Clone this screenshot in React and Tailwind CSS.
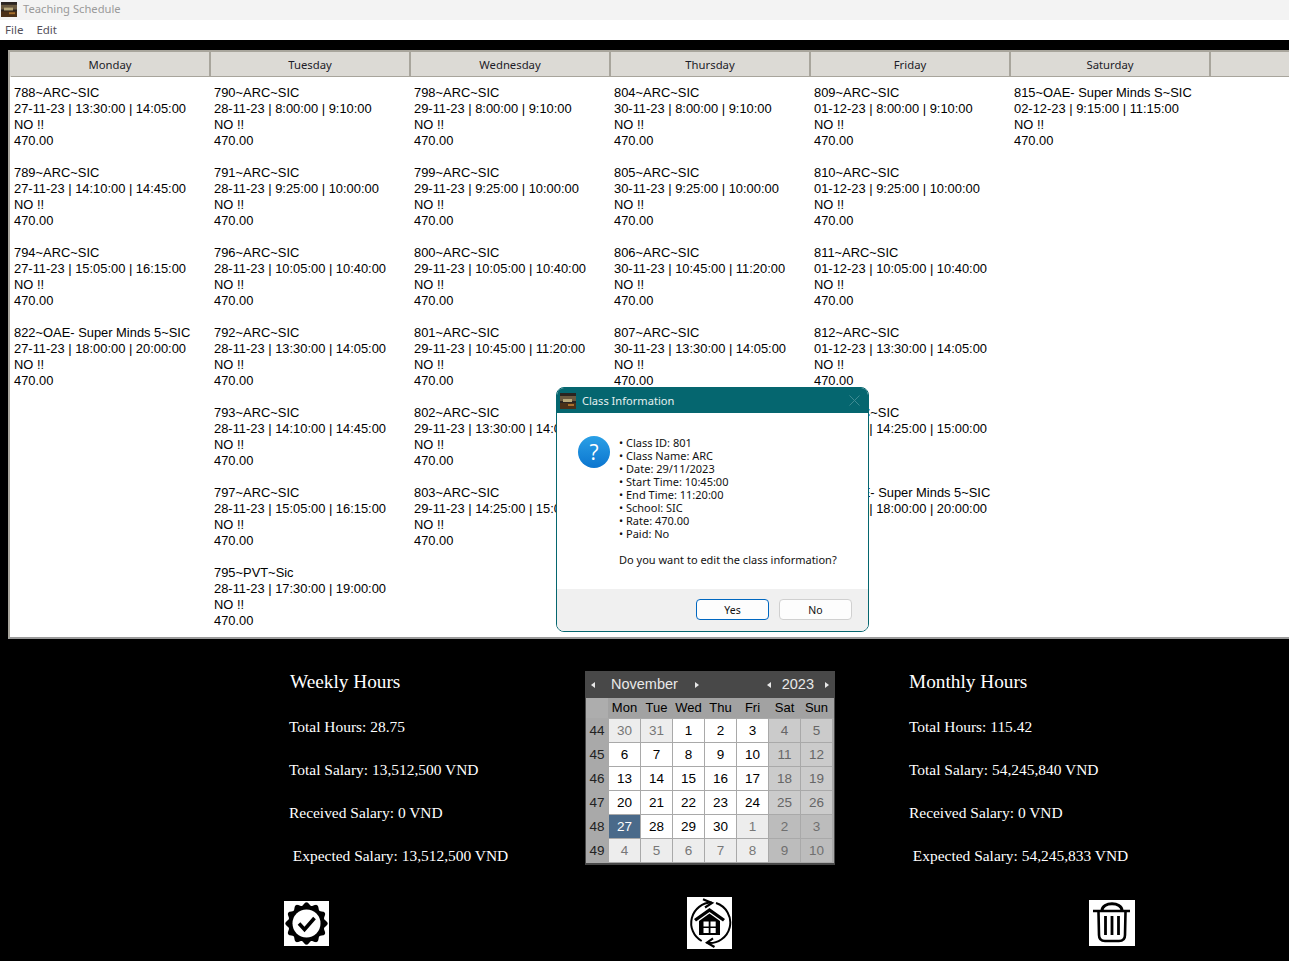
const columns = [
  { day: "Monday", date: "27-11-23", items: [
    ["788~ARC~SIC", "13:30:00 | 14:05:00"], ["789~ARC~SIC", "14:10:00 | 14:45:00"], ["794~ARC~SIC", "15:05:00 | 16:15:00"], ["822~OAE- Super Minds 5~SIC", "18:00:00 | 20:00:00"],
  ]},
  { day: "Tuesday", date: "28-11-23", items: [
    ["790~ARC~SIC", "8:00:00 | 9:10:00"], ["791~ARC~SIC", "9:25:00 | 10:00:00"], ["796~ARC~SIC", "10:05:00 | 10:40:00"], ["792~ARC~SIC", "13:30:00 | 14:05:00"], ["793~ARC~SIC", "14:10:00 | 14:45:00"], ["797~ARC~SIC", "15:05:00 | 16:15:00"], ["795~PVT~Sic", "17:30:00 | 19:00:00"],
  ]},
  { day: "Wednesday", date: "29-11-23", items: [
    ["798~ARC~SIC", "8:00:00 | 9:10:00"], ["799~ARC~SIC", "9:25:00 | 10:00:00"], ["800~ARC~SIC", "10:05:00 | 10:40:00"], ["801~ARC~SIC", "10:45:00 | 11:20:00"], ["802~ARC~SIC", "13:30:00 | 14:05:00"], ["803~ARC~SIC", "14:25:00 | 15:00:00"],
  ]},
  { day: "Thursday", date: "30-11-23", items: [
    ["804~ARC~SIC", "8:00:00 | 9:10:00"], ["805~ARC~SIC", "9:25:00 | 10:00:00"], ["806~ARC~SIC", "10:45:00 | 11:20:00"], ["807~ARC~SIC", "13:30:00 | 14:05:00"],
  ]},
  { day: "Friday", date: "01-12-23", items: [
    ["809~ARC~SIC", "8:00:00 | 9:10:00"], ["810~ARC~SIC", "9:25:00 | 10:00:00"], ["811~ARC~SIC", "10:05:00 | 10:40:00"], ["812~ARC~SIC", "13:30:00 | 14:05:00"], ["813~ARC~SIC", "14:25:00 | 15:00:00"], ["823~OAE- Super Minds 5~SIC", "18:00:00 | 20:00:00"],
  ]},
  { day: "Saturday", date: "02-12-23", items: [["815~OAE- Super Minds S~SIC", "9:15:00 | 11:15:00"]] },
];

const weeks = [
  [44, [[30, 1], [31, 1], [1, 0], [2, 0], [3, 0], [4, 0], [5, 0]]],
  [45, [[6, 0], [7, 0], [8, 0], [9, 0], [10, 0], [11, 0], [12, 0]]],
  [46, [[13, 0], [14, 0], [15, 0], [16, 0], [17, 0], [18, 0], [19, 0]]],
  [47, [[20, 0], [21, 0], [22, 0], [23, 0], [24, 0], [25, 0], [26, 0]]],
  [48, [[27, 0], [28, 0], [29, 0], [30, 0], [1, 1], [2, 1], [3, 1]]],
  [49, [[4, 1], [5, 1], [6, 1], [7, 1], [8, 1], [9, 1], [10, 1]]],
];

function cellClass(di, other, selected) {
  if (selected) return "bg-[#4a6a8a] text-white";
  if (di >= 5) return other ? "bg-[#bcbcbc] text-[#6f6f6f]" : "bg-[#cbcbcb] text-[#666666]";
  return other ? "bg-[#ededed] text-[#777777]" : "bg-white text-black";
}

function Thumb({ className }) {
  return (
    <svg className={className} viewBox="0 0 16 16" preserveAspectRatio="none">
      <rect width="16" height="16" fill="#2b2420" />
      <rect y="3" width="16" height="5" fill="#6b5a40" />
      <rect x="3" y="6" width="9" height="3" fill="#b9a97a" />
      <rect y="10" width="16" height="6" fill="#4a3018" />
      <rect x="8" y="11" width="6" height="2" fill="#a8702c" />
    </svg>
  );
}

function Arrow({ left }) {
  return (
    <svg width="4" height="6" viewBox="0 0 4 6" className="shrink-0">
      <path d={left ? "M4 0 L0 3 L4 6 Z" : "M0 0 L4 3 L0 6 Z"} fill="#e8e8e8" />
    </svg>
  );
}

function Stats({ title, rows, className, headingClass }) {
  return (
    <div className={"flex flex-col shrink-0 text-white [font-family:'Liberation_Serif',serif] " + className}>
      <div className={"text-[19.3px] leading-[22px] h-[46px] shrink-0 " + headingClass}>{title}</div>
      {rows.map((r, i) => (
        <div key={i} className="text-[15.45px] leading-[20px] h-[43px] shrink-0 whitespace-pre pl-px">{r}</div>
      ))}
    </div>
  );
}

function scallop() {
  const n = 12, pts = [];
  for (let i = 0; i <= 240; i++) {
    const a = (i / 240) * Math.PI * 2;
    const r = 19.7 + 1.5 * Math.cos(n * a);
    pts.push((22.5 + r * Math.sin(a)).toFixed(2) + "," + (22.5 - r * Math.cos(a)).toFixed(2));
  }
  return pts.join(" ");
}

function BadgeIcon() {
  return (
    <svg width="45" height="45" viewBox="0 0 45 45" className="bg-white">
      <polygon points={scallop()} fill="#000" />
      <circle cx="22.5" cy="22.5" r="14" fill="#fff" />
      <path d="M15 22.5 L20.5 28.5 L30.5 17" fill="none" stroke="#000" strokeWidth="3.6" />
    </svg>
  );
}

function HomeIcon() {
  return (
    <svg width="45" height="52" viewBox="0 0 45 52" className="bg-white">
      <path d="M14.7 44 A20.5 20.5 0 0 1 24.7 5.6" fill="none" stroke="#000" strokeWidth="2" />
      <path d="M29 6 A20.5 20.5 0 0 1 19.7 45.8" fill="none" stroke="#000" strokeWidth="2" />
      <path d="M16 2.2 L25 6 L18 10.5" fill="none" stroke="#000" strokeWidth="2.2" />
      <path d="M26 41.4 L20 45.6 L27.5 50" fill="none" stroke="#000" strokeWidth="2.2" />
      <path d="M22.5 11 L7 22 L9 24.5 L22.5 15 L36 24.5 L38 22 Z" fill="#000" />
      <path d="M12 24 L22.5 16.5 L33 24 V38 H12 Z" fill="#000" />
      <g fill="#fff">
        <rect x="16.5" y="24.5" width="5.2" height="5" />
        <rect x="23.5" y="24.5" width="5.2" height="5" />
        <rect x="16.5" y="31" width="5.2" height="5" />
        <rect x="23.5" y="31" width="5.2" height="5" />
      </g>
    </svg>
  );
}

function TrashIcon() {
  return (
    <svg width="46" height="46" viewBox="0 0 46 46" className="bg-white">
      <path d="M13 10.5 C13 1.5 33 1.5 33 10.5" fill="none" stroke="#000" strokeWidth="3" />
      <path d="M4 11 H41" stroke="#000" strokeWidth="2.5" />
      <path d="M9.5 12 L10 35 C10 39.5 12 41 16 41 H30 C34 41 36 39.5 36 35 L36.5 12" fill="none" stroke="#000" strokeWidth="2.6" />
      <path d="M16.5 16 V35 M23 16 V35 M29.5 16 V35" stroke="#000" strokeWidth="2.8" />
    </svg>
  );
}

export default function App() {
  return (
    <div className="relative w-[1289px] h-[961px] overflow-hidden bg-black flex flex-col">
      {/* title bar */}
      <div className="h-[20px] shrink-0 bg-[#f3f3f3] flex items-center pl-px pb-[2px]">
        <Thumb className="w-[16px] h-[15px]" />
        <span className="ml-[6px] text-[11.2px] leading-[14px] pb-[1px] text-[#9a9a9a] [font-family:'Noto_Sans',sans-serif]">Teaching Schedule</span>
      </div>
      {/* menu */}
      <div className="h-[20px] shrink-0 bg-white flex items-center pl-[5px] gap-[13px] text-[11.5px] text-[#55505a] [font-family:'Noto_Sans',sans-serif]">
        <span>File</span>
        <span>Edit</span>
      </div>
      {/* table */}
      <div className="mt-[10px] ml-[8px] h-[589px] shrink-0 bg-white border-l-2 border-t-2 border-b-2 border-[#a8a59c] border-b-[#9a9a9a] flex flex-col overflow-hidden">
        <div className="flex h-[25px] shrink-0 pl-px bg-[#dcdad5] text-[11.3px] text-[#1c1c28] [font-family:'Noto_Sans',sans-serif]">
          {columns.map((c) => (
            <div key={c.day} className="w-[200px] shrink-0 flex items-center justify-center pt-[2px] bg-[#dcdad5] border-r-2 border-b border-[#a8a59c]">{c.day}</div>
          ))}
          <div className="flex-1 bg-[#dcdad5] border-b border-[#a8a59c]" />
        </div>
        <div className="flex pt-[8px] text-[12.9px] leading-[16px] text-black [font-family:'Liberation_Sans',sans-serif]">
          {columns.map((c) => (
            <div key={c.day} className="w-[200px] shrink-0 pl-[4px] flex flex-col gap-[16px]">
              {c.items.map(([name, time]) => (
                <div key={name} className="whitespace-nowrap">
                  <div>{name}</div>
                  <div>{c.date} | {time}</div>
                  <div>NO !!</div>
                  <div>470.00</div>
                </div>
              ))}
            </div>
          ))}
        </div>
      </div>
      {/* bottom */}
      <div className="flex pl-[288px] pt-[32px] h-[258px] shrink-0">
        <Stats
          className="w-[297px]"
          headingClass="pl-[2px]"
          title="Weekly Hours"
          rows={["Total Hours: 28.75", "Total Salary: 13,512,500 VND", "Received Salary: 0 VND", " Expected Salary: 13,512,500 VND"]}
        />
        <div className="w-[250px] h-[194px] shrink-0 bg-[#a9a9a9] border-b-2 border-x border-[#484848] flex flex-col [font-family:'Liberation_Sans',sans-serif] text-[13.5px]">
          <div className="h-[27px] shrink-0 bg-[#484848] text-[#e8e8e8] text-[14.5px] flex items-center pl-[5px] pr-[5px]">
            <Arrow left />
            <span className="ml-[16px] w-[70px]">November</span>
            <span className="ml-[14px]"><Arrow /></span>
            <span className="flex-1" />
            <Arrow left />
            <span className="mx-[11px]">2023</span>
            <Arrow />
          </div>
          <div className="grid grid-cols-[22px_repeat(7,31px)] gap-x-px h-[20px] shrink-0 items-center text-center text-[13px] text-black bg-[#a2a2a2]">
            <span className="bg-[#adadad] h-full" />
            {["Mon", "Tue", "Wed", "Thu", "Fri", "Sat", "Sun"].map((d) => (
              <span key={d} className="h-full leading-[20px] whitespace-nowrap">{d}</span>
            ))}
          </div>
          <div className="flex flex-col gap-px pt-px">
            {weeks.map(([w, days]) => (
              <div key={w} className="grid grid-cols-[22px_repeat(7,31px)] gap-x-px h-[23px] items-center text-center">
                <span className="text-[#222222] pt-[2px]">{w}</span>
                {days.map(([d, other], di) => (
                  <span key={di} className={"h-full leading-[23px] " + cellClass(di, other === 1, w === 48 && d === 27)}>{d}</span>
                ))}
              </div>
            ))}
          </div>
        </div>
        <Stats
          className="w-[300px] ml-[73px]"
          headingClass="pl-px"
          title="Monthly Hours"
          rows={["Total Hours: 115.42", "Total Salary: 54,245,840 VND", "Received Salary: 0 VND", " Expected Salary: 54,245,833 VND"]}
        />
      </div>
      {/* icons */}
      <div className="flex items-center h-[52px] pl-[284px]">
        <BadgeIcon />
        <div className="ml-[358px]"><HomeIcon /></div>
        <div className="ml-[357px]"><TrashIcon /></div>
      </div>
      {/* dialog */}
      <div className="absolute left-[556px] top-[387px] w-[313px] h-[245px] rounded-[8px] border border-[#05666f] overflow-hidden bg-white flex flex-col [font-family:'Noto_Sans',sans-serif]">
        <div className="h-[25px] shrink-0 bg-[#05666f] flex items-center pl-[3px] pr-[8px]">
          <Thumb className="w-[16px] h-[16px]" />
          <span className="ml-[6px] pt-px text-[11.1px] text-[#e6f0f0]">Class Information</span>
          <span className="flex-1" />
          <svg width="11" height="11" viewBox="0 0 11 11">
            <path d="M0.5 0.5 L10.5 10.5 M10.5 0.5 L0.5 10.5" stroke="#3f8b92" strokeWidth="1" />
          </svg>
        </div>
        <div className="flex-1 flex pl-[21px] pt-[23px]">
          <div className="w-[32px] h-[32px] rounded-full bg-gradient-to-b from-[#2aa0e6] to-[#0b75cf] text-white flex items-center justify-center text-[21px] leading-[32px] shrink-0 [font-family:'Open_Sans',sans-serif]">?</div>
          <div className="ml-[9px] text-[11px] leading-[13px] text-[#111111] whitespace-nowrap">
            {["Class ID: 801", "Class Name: ARC", "Date: 29/11/2023", "Start Time: 10:45:00", "End Time: 11:20:00", "School: SIC", "Rate: 470.00", "Paid: No"].map((t) => (
              <div key={t}>• {t}</div>
            ))}
            <div className="mt-[13px]">Do you want to edit the class information?</div>
          </div>
        </div>
        <div className="h-[42px] shrink-0 bg-[#f0f0f0] flex items-start justify-end gap-[10px] pt-[10px] pr-[16px] text-[10.5px] text-[#111111]">
          <button className="w-[73px] h-[21px] rounded-[4px] bg-[#fdfdfd] border border-[#0067c0] leading-[18px]">Yes</button>
          <button className="w-[73px] h-[21px] rounded-[4px] bg-[#fdfdfd] border border-[#d0d0d0] leading-[18px]">No</button>
        </div>
      </div>
    </div>
  );
}
